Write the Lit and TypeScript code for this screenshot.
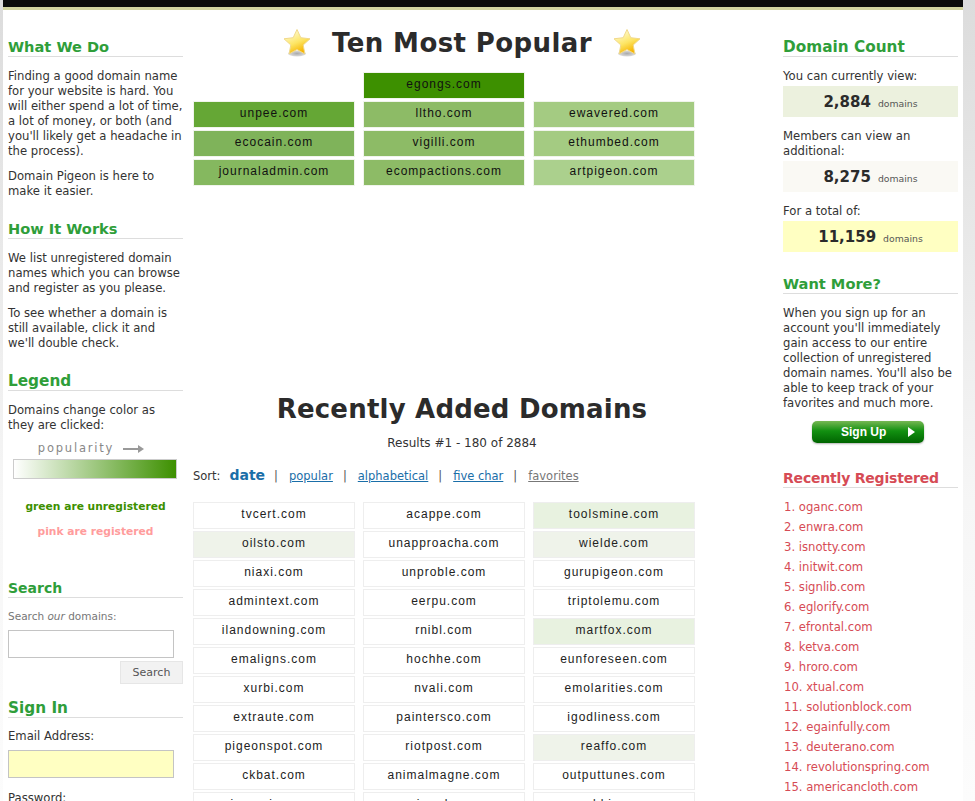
import { LitElement, html, css, svg } from "lit";
import { customElement } from "lit/decorators.js";

const top = [
  [null, "egongs.com", null],
  ["unpee.com", "lltho.com", "ewavered.com"],
  ["ecocain.com", "vigilli.com", "ethumbed.com"],
  ["journaladmin.com", "ecompactions.com", "artpigeon.com"],
];
const topColors = [
  [null, "#3d9000", null],
  ["#65a735", "#8dbb66", "#a4cb82"],
  ["#7fb35a", "#8dbb66", "#a4cb82"],
  ["#85b85f", "#8dbb66", "#abd08d"],
];
const recent: [string, string][][] = [
  [["tvcert.com", ""], ["acappe.com", ""], ["toolsmine.com", "fav2"]],
  [["oilsto.com", "fav"], ["unapproacha.com", ""], ["wielde.com", "fav"]],
  [["niaxi.com", ""], ["unproble.com", ""], ["gurupigeon.com", ""]],
  [["admintext.com", ""], ["eerpu.com", ""], ["triptolemu.com", ""]],
  [["ilandowning.com", ""], ["rnibl.com", ""], ["martfox.com", "fav2"]],
  [["emaligns.com", ""], ["hochhe.com", ""], ["eunforeseen.com", ""]],
  [["xurbi.com", ""], ["nvali.com", ""], ["emolarities.com", ""]],
  [["extraute.com", ""], ["paintersco.com", ""], ["igodliness.com", ""]],
  [["pigeonspot.com", ""], ["riotpost.com", ""], ["reaffo.com", "fav"]],
  [["ckbat.com", ""], ["animalmagne.com", ""], ["outputtunes.com", ""]],
  [["jaypraise.com", ""], ["sinard.com", ""], ["cobbia.com", ""]],
];
const registered = ["oganc.com","enwra.com","isnotty.com","initwit.com","signlib.com","eglorify.com","efrontal.com","ketva.com","hroro.com","xtual.com","solutionblock.com","egainfully.com","deuterano.com","revolutionspring.com","americancloth.com"];

const star = svg`<svg class="star" viewBox="0 0 30 30" width="30" height="30" aria-hidden="true">
  <defs>
    <linearGradient id="sg" x1="0.2" y1="0.1" x2="0.6" y2="0.95"><stop offset="0" stop-color="#fffbd0"/><stop offset="0.55" stop-color="#fde564"/><stop offset="1" stop-color="#f6b400"/></linearGradient>
    <radialGradient id="ss"><stop offset="0" stop-color="#aaa"/><stop offset="1" stop-color="#ddd"/></radialGradient>
  </defs>
  <ellipse cx="15" cy="25.5" rx="9" ry="3" fill="url(#ss)"/>
  <path d="M15 1.5 L18.8 9.7 L28 10.8 L21.2 17 L22.9 25.9 L15 21.5 L7.1 25.9 L8.8 17 L2 10.8 L11.2 9.7 Z" fill="url(#sg)" stroke="#f1d98a" stroke-width="1" stroke-linejoin="round"/>
</svg>`;

@customElement("app-root")
export class AppRoot extends LitElement {
  static styles = css`
    :host { display: block; height: 801px; overflow: hidden; background: linear-gradient(180deg, #dcdcdc, #f6f6f6 500px, #fcfcfc); font-family: "DejaVu Sans", Verdana, sans-serif; font-size: 11.65px; line-height: 15px; color: #333; }
    .page { margin-left: 3px; width: 960px; height: 801px; background: #fff; overflow: hidden; }
    .bar { height: 7px; background: #0b0b0b; border-bottom: 3px solid #d2d4a0; }
    .cols { display: flex; padding: 18px 5px 0 5px; }
    .left { width: 175px; flex: none; padding-top: 10px; }
    .center { width: 538px; flex: none; margin: 0 52px 0 10px; }
    .right { width: 175px; flex: none; padding-top: 10px; }
    h3 { margin: 0 0 12px; font-size: 15.3px; line-height: 18px; font-weight: 700; color: #2f9e3a; border-bottom: 1px solid #ddd; padding-bottom: 0; white-space: nowrap; }
    h3.tight { font-size: 14.6px; }
    h3.s { font-size: 14px; }
    h3.red { color: #d64b55; font-size: 14px; letter-spacing: -0.2px; }
    p { margin: 0 0 10px; }
    section { margin-bottom: 21px; }
    section.search { margin-top: 40px; margin-bottom: 15px; }
    section.count { margin-bottom: 23px; }
    section.more { margin-bottom: 26px; }
    .pop { display: flex; justify-content: center; align-items: center; gap: 9px; color: #888; letter-spacing: 1.8px; font-size: 11.5px; margin-top: -2px; padding-right: 8px; }
    .ramp { height: 18px; width: 162px; margin: 3px 0 0 5px; border: 1px solid #ccc; background: linear-gradient(90deg, #fff, #3d9000); }
    .note { text-align: center; font-weight: 700; font-size: 10.7px; margin: 20px 0 0; }
    .green { color: #3d9000; }
    .note.pink { color: #ff9c9c; margin-top: 10px; }
    .small { font-size: 10.5px; color: #777; margin-bottom: 6px; margin-top: -1px; }
    input { display: block; box-sizing: border-box; width: 166px; height: 28px; border: 1px solid #c4c4c4; background: #fff; margin: 0; padding: 0; }
    input.y { background: #ffffc2; }
    .sbtn { display: block; margin: 3px 0 0 auto; width: 63px; height: 23px; box-sizing: border-box; background: #f2f2f2; border: 1px solid #e6e6e6; font: 11px "DejaVu Sans", sans-serif; color: #555; padding: 0; }
    .label { margin-bottom: 6px; margin-top: -1px; }
    .label.pw { margin-top: 13px; }
    h1 { margin: 0; font-size: 26px; line-height: 30px; letter-spacing: 0.4px; font-weight: 700; color: #2b2b2b; text-align: center; }
    h1.narrow { letter-spacing: 0.2px; }
    .title { display: flex; justify-content: center; align-items: center; gap: 20px; height: 30px; margin-bottom: 14px; }
    .grid { display: grid; grid-template-columns: repeat(3, 162px); column-gap: 8px; row-gap: 2px; }
    .cell { box-sizing: border-box; height: 27px; border: 1px solid #eee; font: 12px/23px "Liberation Sans", Arial, sans-serif; letter-spacing: 1px; color: #222; text-align: center; white-space: nowrap; }
    .grid.t .cell { color: #111; border-color: #f0f4ec; }
    .fav { background: #eff3ea; }
    .fav2 { background: #e8f2e0; }
    .rec { margin-top: 208px; }
    .res { text-align: center; font-size: 12px; margin: 12px 0 0; color: #333; line-height: 15px; }
    .sort { display: flex; align-items: baseline; margin: 17px 0 18px; font-size: 11.5px; white-space: nowrap; }
    .sort .by { font-size: 14px; font-weight: 700; color: #1a6ea8; margin: 0 -1px 0 9px; }
    .sort a { color: #1a6ea8; text-decoration: underline; }
    .sort a.off { color: #777; }
    .sort i { font-style: normal; margin: 0 11px 0 10px; color: #555; }
    .cnt { display: flex; justify-content: center; align-items: baseline; gap: 7px; height: 31px; line-height: 33px; margin: 2px 0 12px; font-size: 9.3px; color: #555; }
    .cnt b { font-size: 15px; color: #2b2b2b; }
    .c1 { background: #ecf1de; } .c2 { background: #faf9f4; } .c3 { background: #ffffc2; }
    .signup { display: flex; align-items: center; box-sizing: border-box; width: 112px; height: 22px; margin: 2px 0 0 29px; border-radius: 5px; background: linear-gradient(#76b753, #129011 45%, #006400); box-shadow: 0 1px 2px rgba(0,0,0,.3); color: #fff; font: 700 12px "Liberation Sans", Arial, sans-serif; padding-left: 29px; }
    .signup svg { margin-left: 22px; }
    ol { list-style: none; margin: -3px 0 0; padding: 0 0 0 1px; color: #d64b55; line-height: 20px; }
  `;

  render() {
    return html`<div class="page">
      <div class="bar"></div>
      <div class="cols">
        <div class="left">
          <section>
            <h3 class="tight">What We Do</h3>
            <p>Finding a good domain name for your website is hard. You will either spend a lot of time, a lot of money, or both (and you'll likely get a headache in the process).</p>
            <p>Domain Pigeon is here to make it easier.</p>
          </section>
          <section>
            <h3 class="tight">How It Works</h3>
            <p>We list unregistered domain names which you can browse and register as you please.</p>
            <p>To see whether a domain is still available, click it and we'll double check.</p>
          </section>
          <section>
            <h3>Legend</h3>
            <p>Domains change color as they are clicked:</p>
            <div class="pop"><span>popularity</span><svg width="22" height="10" viewBox="0 0 22 10"><path d="M0 5H16" stroke="#999" stroke-width="2"/><path d="M15 1L21 5L15 9Z" fill="#999"/></svg></div>
            <div class="ramp"></div>
            <div class="note green">green are unregistered</div>
            <div class="note pink">pink are registered</div>
          </section>
          <section class="search">
            <h3 class="s">Search</h3>
            <div class="small">Search <em>our</em> domains:</div>
            <input />
            <button class="sbtn">Search</button>
          </section>
          <section>
            <h3>Sign In</h3>
            <div class="label">Email Address:</div>
            <input class="y" />
            <div class="label pw">Password:</div>
          </section>
        </div>
        <div class="center">
          <div class="title">${star}<h1>Ten Most Popular</h1>${star}</div>
          <div class="grid t">
            ${top.flatMap((r, i) => r.map((d, j) => d
              ? html`<div class="cell" style="background:${topColors[i][j]}">${d}</div>`
              : html`<div></div>`))}
          </div>
          <div class="rec">
            <h1 class="narrow">Recently Added Domains</h1>
            <div class="res">Results #1 - 180 of 2884</div>
            <div class="sort"><span>Sort:</span><span class="by">date</span><i>|</i><a>popular</a><i>|</i><a>alphabetical</a><i>|</i><a>five char</a><i>|</i><a class="off">favorites</a></div>
            <div class="grid">
              ${recent.flatMap(r => r.map(([d, f]) => html`<div class="cell ${f}">${d}</div>`))}
            </div>
          </div>
        </div>
        <div class="right">
          <section class="count">
            <h3>Domain Count</h3>
            <div>You can currently view:</div>
            <div class="cnt c1"><b>2,884</b> domains</div>
            <div>Members can view an additional:</div>
            <div class="cnt c2"><b>8,275</b> domains</div>
            <div>For a total of:</div>
            <div class="cnt c3"><b>11,159</b> domains</div>
          </section>
          <section class="more">
            <h3 class="tight">Want More?</h3>
            <p>When you sign up for an account you'll immediately gain access to our entire collection of unregistered domain names. You'll also be able to keep track of your favorites and much more.</p>
            <div class="signup">Sign Up<svg width="7" height="10" viewBox="0 0 7 10"><path d="M0 0L7 5L0 10Z" fill="#fff"/></svg></div>
          </section>
          <section>
            <h3 class="red">Recently Registered</h3>
            <ol>${registered.map((d, i) => html`<li>${i + 1}. ${d}</li>`)}</ol>
          </section>
        </div>
      </div>
    </div>`;
  }
}
